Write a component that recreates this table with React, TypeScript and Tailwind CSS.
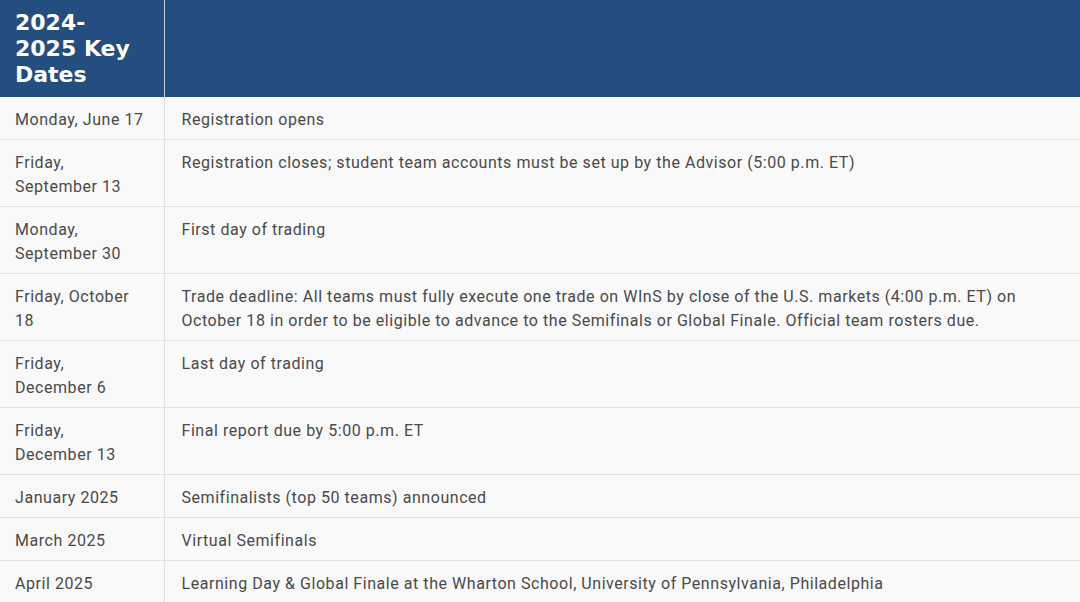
const rows: [string, string][] = [
  ["Monday, June 17", "Registration opens"],
  ["Friday,\nSeptember 13", "Registration closes; student team accounts must be set up by the Advisor (5:00 p.m. ET)"],
  ["Monday,\nSeptember 30", "First day of trading"],
  [
    "Friday, October\n18",
    "Trade deadline: All teams must fully execute one trade on WInS by close of the U.S. markets (4:00 p.m. ET) on October 18 in order to be eligible to advance to the Semifinals or Global Finale. Official team rosters due.",
  ],
  ["Friday,\nDecember 6", "Last day of trading"],
  ["Friday,\nDecember 13", "Final report due by 5:00 p.m. ET"],
  ["January 2025", "Semifinalists (top 50 teams) announced"],
  ["March 2025", "Virtual Semifinals"],
  ["April 2025", "Learning Day & Global Finale at the Wharton School, University of Pennsylvania, Philadelphia"],
];

const App = () => {
  return (
    <div className="w-[1080px] h-[602px] overflow-hidden bg-[#f9f9f9] font-['Roboto',sans-serif]">
      <table className="w-full border-collapse table-fixed">
        <colgroup>
          <col className="w-[164px]" />
          <col />
        </colgroup>
        <thead>
          <tr className="bg-[#234e7f] h-[97px]">
            <th className="border-r border-[#c9d3df] pl-[15px] pr-[12px] pt-[10px] pb-[8px] text-left align-top text-white font-bold text-[22px] leading-[26px] whitespace-pre-line font-['DejaVu_Sans',sans-serif]">
              {"2024-\n2025 Key\nDates"}
            </th>
            <th />
          </tr>
        </thead>
        <tbody>
          {rows.map(([date, desc]) => (
            <tr key={date} className="border-b border-[#e2e2e2] text-[16px] leading-[24px] tracking-[0.55px] text-[#4a4a4a]">
              <td className="border-r border-[#e2e2e2] pl-[15px] pr-[8px] pt-[11px] pb-[7px] align-top whitespace-pre-line">{date}</td>
              <td className="pl-[17px] pr-4 pt-[11px] pb-[7px] align-top">{desc}</td>
            </tr>
          ))}
        </tbody>
      </table>
    </div>
  );
};

export default App;
